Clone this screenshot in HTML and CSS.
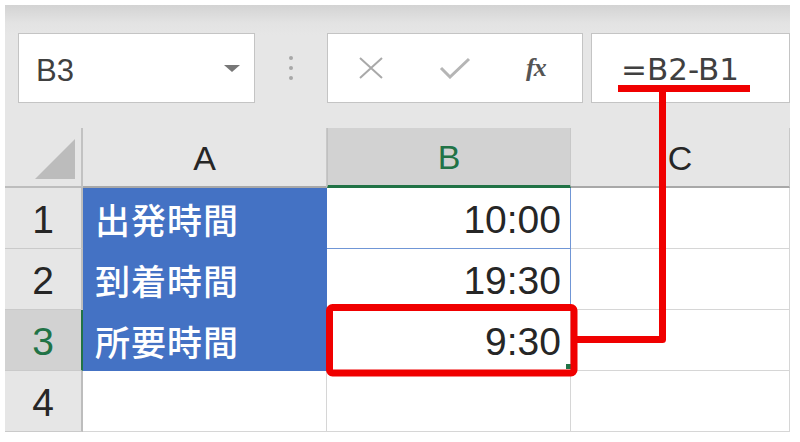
FILE: index.html
```html
<!DOCTYPE html>
<html lang="ja">
<head>
<meta charset="utf-8">
<title>Excel 所要時間</title>
<link rel="stylesheet" href="styles.css">
</head>
<body>
<div class="app">
  <div class="toolbar">
    <div class="namebox">
      <span class="name">B3</span>
      <span class="caret"></span>
    </div>
    <div class="grip"><i></i><i></i><i></i></div>
    <div class="fxbox">
      <svg class="ic-x" width="26" height="22" viewBox="0 0 26 22"><path d="M2 1 L24 21 M24 1 L2 21" stroke="#a9a9a9" stroke-width="2" fill="none"/></svg>
      <svg class="ic-ok" width="32" height="22" viewBox="0 0 32 22"><path d="M2 11 L11 20 L30 2" stroke="#b5b5b5" stroke-width="3" fill="none"/></svg>
      <span class="fx">fx</span>
    </div>
    <div class="formula"><span>=B2-B1</span></div>
  </div>
  <div class="sheet">
    <div class="corner"><span class="tri"></span></div>
    <div class="colhead">A</div>
    <div class="colhead sel">B</div>
    <div class="colhead">C</div>

    <div class="rowhead">1</div>
    <div class="cell label">出発時間</div>
    <div class="cell num sel-range">10:00</div>
    <div class="cell"></div>

    <div class="rowhead">2</div>
    <div class="cell label">到着時間</div>
    <div class="cell num sel-range">19:30</div>
    <div class="cell"></div>

    <div class="rowhead sel">3</div>
    <div class="cell label">所要時間</div>
    <div class="cell num active">9:30<span class="handle"></span></div>
    <div class="cell"></div>

    <div class="rowhead">4</div>
    <div class="cell"></div>
    <div class="cell"></div>
    <div class="cell"></div>
  </div>
</div>
<svg class="annot" width="800" height="442" viewBox="0 0 800 442">
  <rect x="329.5" y="307.5" width="244.5" height="65.5" rx="3" fill="none" stroke="#f00000" stroke-width="7"/>
  <path d="M574 339.5 H662.5 V88.5" fill="none" stroke="#f00000" stroke-width="7" stroke-linejoin="round"/>
  <path d="M618 88.5 H750" fill="none" stroke="#f00000" stroke-width="7"/>
</svg>
</body>
</html>
```
FILE: styles.css
```css
html, body {
  margin: 0;
  padding: 0;
  background: #ffffff;
  width: 800px;
  height: 442px;
  overflow: hidden;
  position: relative;
  font-family: "Liberation Sans", Arial, sans-serif;
}

.app {
  margin: 5px 0 0 5px;
  width: 785px;
}

.toolbar {
  height: 123px;
  box-sizing: border-box;
  padding: 28px 0 0 13px;
  background: linear-gradient(#d3d3d3 0px, #e3e3e3 18px, #e6e6e6 30px);
  display: flex;
  align-items: flex-start;
}

.namebox {
  width: 237px;
  height: 70px;
  box-sizing: border-box;
  background: #fff;
  border: 1px solid #c4c4c4;
  display: flex;
  align-items: center;
  justify-content: space-between;
  padding: 0 14px 0 17px;
}

.name {
  font-size: 31px;
  color: #404040;
  padding-top: 6px;
}

.caret {
  width: 0;
  height: 0;
  border-left: 8px solid transparent;
  border-right: 8px solid transparent;
  border-top: 7px solid #777;
}

.grip {
  width: 72px;
  height: 70px;
  display: flex;
  flex-direction: column;
  align-items: center;
  justify-content: center;
  gap: 6px;
}

.grip i {
  display: block;
  width: 4px;
  height: 4px;
  border-radius: 50%;
  background: #a8a8a8;
}

.fxbox {
  width: 256px;
  height: 70px;
  box-sizing: border-box;
  background: #fff;
  border: 1px solid #c4c4c4;
  display: flex;
  align-items: center;
  padding: 0 0 0 30px;
}

.ic-x { margin-right: 55px; }
.ic-ok { margin-right: 55px; }

.fx {
  font-family: "Liberation Serif", "DejaVu Serif", serif;
  font-style: italic;
  font-weight: bold;
  font-size: 26px;
  color: #555;
  letter-spacing: -1px;
}

.formula {
  flex: 1;
  margin-left: 8px;
  height: 70px;
  box-sizing: border-box;
  background: #fff;
  border: 1px solid #c4c4c4;
  display: flex;
  align-items: center;
  padding-left: 29px;
}

.formula span {
  font-family: "DejaVu Sans", sans-serif;
  font-size: 31px;
  color: #404040;
  padding-top: 2px;
}

.sheet {
  display: grid;
  grid-template-columns: 78px 244px 244px 219px;
  grid-template-rows: 60px 61px 61px 61px 61px;
  background: #fff;
}

.corner {
  background: #e6e6e6;
  border-right: 2px solid #c2c2c2;
  border-bottom: 2px solid #bdbdbd;
  box-sizing: border-box;
  position: relative;
}

.tri {
  position: absolute;
  left: 30px;
  top: 11px;
  width: 0;
  height: 0;
  border-left: 40px solid transparent;
  border-bottom: 40px solid #bcbcbc;
}

.colhead {
  background: #e6e6e6;
  border-right: 1px solid #c8c8c8;
  border-bottom: 2px solid #a8a8a8;
  box-sizing: border-box;
  display: flex;
  align-items: center;
  justify-content: center;
  font-size: 34px;
  color: #262626;
  padding-top: 2px;
}

.colhead.sel {
  background: #d2d2d2;
  border-bottom: 3px solid #217346;
  border-left: 1px solid #c0c0c0;
  color: #217346;
}

.rowhead {
  background: #e6e6e6;
  border-right: 2px solid #bdbdbd;
  border-bottom: 1px solid #cacaca;
  box-sizing: border-box;
  display: flex;
  align-items: center;
  justify-content: center;
  font-size: 39px;
  color: #262626;
  padding-top: 3px;
}

.rowhead.sel {
  background: #d2d2d2;
  border-right: 2px solid #217346;
  color: #217346;
}

.cell {
  border-right: 1px solid #d6d6d6;
  border-bottom: 1px solid #d6d6d6;
  box-sizing: border-box;
  display: flex;
  align-items: center;
  position: relative;
}

.cell.label {
  background: #4472c4;
  border-color: #4472c4;
  color: #ffffff;
  font-family: "Noto Sans CJK JP", "Noto Sans CJK SC", sans-serif;
  font-weight: 500;
  font-size: 35px;
  padding-left: 12px;
  letter-spacing: 1px;
}

.cell.num {
  justify-content: flex-end;
  padding-right: 9px;
  font-size: 39px;
  color: #262626;
  padding-top: 3px;
}

.cell.sel-range {
  border-right: 1px solid #7096d6;
  border-bottom: 1px solid #7096d6;
}

.handle {
  position: absolute;
  right: -1px;
  bottom: 1px;
  width: 5px;
  height: 5px;
  background: #217346;
}

.annot {
  position: absolute;
  left: 0;
  top: 0;
  pointer-events: none;
}
```
